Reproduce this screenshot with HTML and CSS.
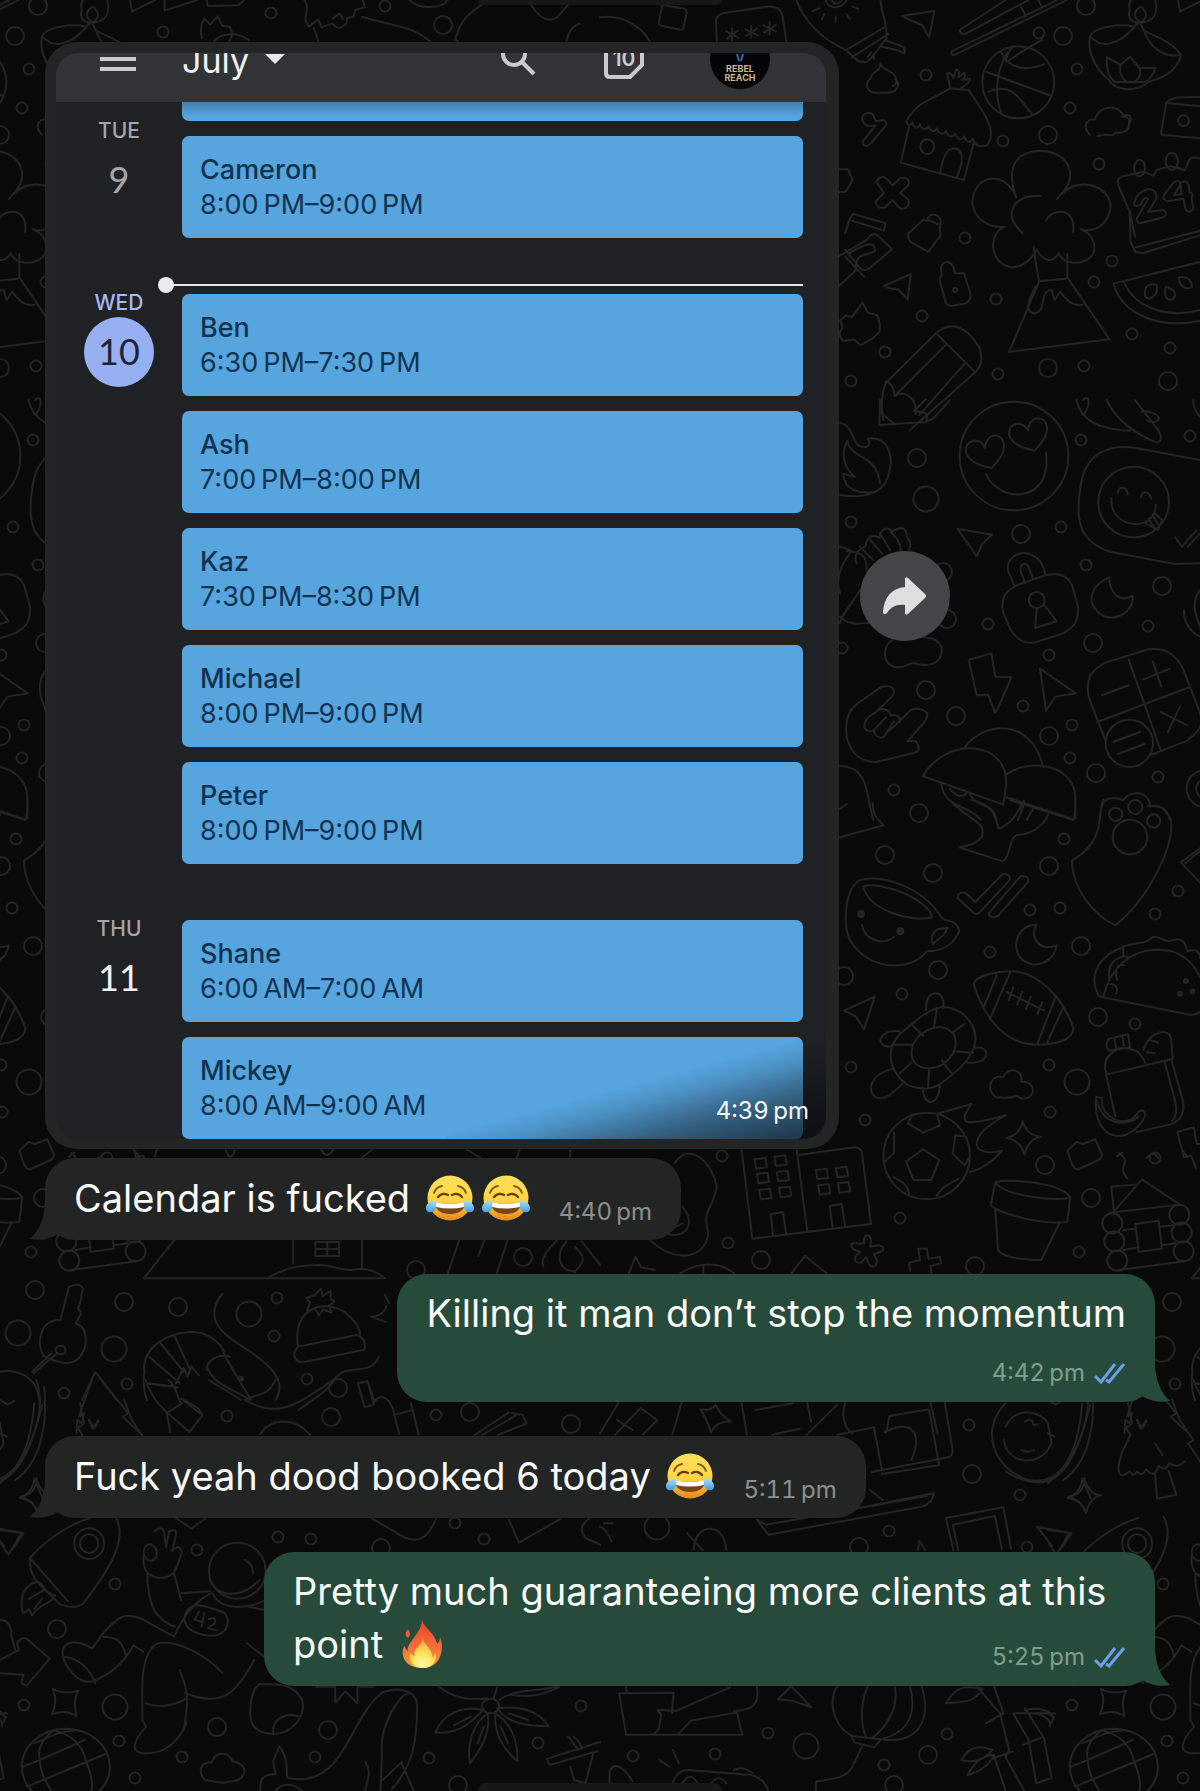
FILE: index.html
```html
<!DOCTYPE html>
<html lang="en">
<head>
<meta charset="utf-8">
<meta name="viewport" content="width=device-width, initial-scale=1">
<title>Chat</title>
<link rel="stylesheet" href="styles.css">
</head>
<body>
<svg class="wallpaper" viewBox="0 0 1200 1791" preserveAspectRatio="xMinYMin slice" aria-hidden="true">
  <defs>
    <path id="small" d="M163 32h0M271 13h0M385 6h0M1039 33h0M1077 69h0M1070 108h0M1003 141h0M926 75h0M1099 164h0M965 238h0M1112 261h0M1094 282h0M996 299h0M922 316h0M1132 334h0M1170 348h0M885 352h0M1084 366h0M998 374h0M851 381h0M851 522h0M1081 440h0M1190 436h0M1061 527h0M1086 565h0M988 624h0M1148 626h0M1049 655h0M1023 706h0M1072 725h0M1070 758h0M1158 777h0M894 790h0M842 648h0M1064 839h0M1030 910h0M1060 908h0M1178 891h0M1155 914h0M990 952h0M902 994h0M1135 1024h0M851 1067h0M1049 1065h0M1050 1112h0M865 1120h0M1155 1158h0M900 1218h0M1079 1252h0M277 1298h0M274 1336h0M64 1393h0M127 1384h0M307 1379h0M722 1156h0M728 1243h0M227 1416h0M436 1415h0M278 1537h0M311 1539h0M197 1550h0M455 1523h0M484 1539h0M115 1584h0M24 1705h0M119 1741h0M182 1757h0M315 1757h0M135 1778h0M429 1758h0M538 1743h0M581 1706h0M969 1425h0M1020 1495h0M889 1531h0M1027 1547h0M768 1733h0M947 1734h0M715 1754h0M633 1756h0M884 1765h0"/>
    <path id="medium" d="M443 25h0M1063 36h0M1048 135h0M1048 368h0M1168 381h0M1086 6h0M917 458h0M1021 534h0M1162 586h0M1093 643h0M926 690h0M956 716h0M1049 736h0M1096 773h0M919 813h0M943 572h0M947 619h0M885 855h0M933 873h0M1049 866h0M1081 946h0M938 970h0M844 976h0M1098 1017h0M1045 1165h0M1091 1198h0M35 1290h0M124 1302h0M178 1307h0M338 1388h0M523 1257h0M416 1270h0M761 1260h0M975 1266h0M331 1417h0M470 1412h0M571 1424h0M381 1548h0M57 1629h0M217 1727h0M328 1730h0M458 1785h0M972 1474h0M859 1547h0M928 1755h0M894 1785h0"/>
    <path id="large" d="M926 499h0M1077 1082h0M249 1314h0M18 1333h0M114 1349h0M115 1707h0M657 1527h0M806 1746h0"/>
    <g id="tile">
      <use href="#small" class="ring s"/><use href="#small" class="hole s"/>
      <use href="#medium" class="ring m"/><use href="#medium" class="hole m"/>
      <use href="#large" class="ring l"/><use href="#large" class="hole l"/>
      <g class="ink" transform="scale(.3827 .3333)">
        <path d="M340 0l5 35 60-35M430 0v32l85-32M540 0l3 18 80-2 15-16M528 115c-6-20-3-40 5-60l16 18 20-24 12 28 20 4c8 22 6 30-3 44M560 124c15-25 60-30 90-4M795 0c20 30-10 50 12 80l25-22 8 24 28-12c14 26 42 8 38-16l18-4 4-20 26-8-6-22M870 55l18-14 8 16M820 84l12 40M945 50l120 36c25 8 40 22 60 38M1070 0c20 28 85 28 100 0M1190 118c10-50 30-80 90-118M1190 118l8 8M1380 0c20 40 45 75 75 52l40-50M1480 124c5-30 20-50 35-52"/>
      </g>
      <g class="ink" transform="translate(600) scale(.3827 .3333)">
        <path d="M0 52c60-10 110 30 130 72M160 14l60 12q8 4 6 14l-8 44q-2 6-8 5l-50-12q-8-3-6-12l8-44q2-6 6-5M305 124l-2-60q2-22 24-26l110-18q35-2 40 28l10 76M345 85v38M330 94l32 20M360 92l-28 24M395 78v36M380 88l32 18M410 86l-28 22M443 66v38M428 76l32 18M459 75l-30 22"/>
        <path d="M513 0c20 65 70 120 130 150l30 32c20 10 30 2 40-14l35-52c6-40-15-80-15-118M643 150l100-68M658 172l95-70M748 122l40 16q12 8 8 20-8 2-14-6l-45-12M590 0c4 30 50 30 56-8M605 0c6 16 24 14 28-6M572 25l-16 8M586 42l-6 16M616 50v16M644 42l8 14M660 20l14 6M700 170l8-12M716 165v12"/>
        <path d="M788 48l86-16-14 80-18-36zM1060 0L940 90q2 14 14 12L1120 0M1195 0L918 154q-2 12 10 10L1220 0M1100 20l12 28M1142-8l12 28"/>
        <path d="M732 192c8 20 40 20 42 48 12 16 0 38-20 38h-40c-22-8-20-36-6-42-2-24 28-20 24-44zM765 258c12-4 10-16 6-20M690 370c-8-14-6-30 12-32 14 0 15 16 18 26l22-4q10 8 4 18l-40 54q-16 14-20-6l34-50c-12 4-22 4-30-6z"/>
        <ellipse cx="1093" cy="247" rx="94" ry="108"/><path d="M1048 155c20 50 60 60 112 38M1080 138c-50 60-50 150-30 205M1010 216l170 72M1015 275c60-30 80 20 115 70M1075 140c-30 80-20 40 80-20"/>
        <path d="M915 265c-40 30-90 40-115 100 4 12 10 14 16 2 4 20 16 20 20 4 4 20 18 20 22 6 6 20 18 20 22 8 6 20 18 20 24 8 4 18 18 22 24 8 6 20 18 22 24 8 6 20 16 22 22 6 4 20 12 26 26 24 10 0 14-4 16-12 20-40-14-90-52-156zM915 265l-8-44c8-6 12 4 16 12l8-25c10 4 8 14 6 24l14-14c8 8 2 14-4 22l20-4c0 12-10 16-22 28M808 378l-22 110 165 52 25-110M890 515c5-40 15-70 35-70 30 4 22 50 8 84"/><ellipse cx="855" cy="440" rx="18" ry="22"/>
        <path d="M1280 110c10-30 80-40 115-30l15-15 10 25c30 20 70 30 98 74-10 55-50 70-85 82-30 30-85 30-105-8-32-30-55-80-48-128zM1283 112c30 35 70 22 112-28M1420 86c15 60 60 90 96 78M1324 172l36 22 25-24 25 34 42 0c-8 20-16 40-34 42h-72c-16-10-22-40-22-74zM1360 194c-4 25 4 40 14 50M1410 204c4 20-2 35-12 40M1384 30c-8 30 10 38 25 38 40 0 50-30 42-68M1384 30q-4-20 4-30M1414 68c-30-20-10-45 0-48 14 16 20 26 0 48"/>
        <path d="M1280 404c-18-20-14-46 14-46 8-44 62-46 74-10 20-10 20 8 18 16M1300 408l24-4q20 6 22-6c30 2 38-12 36-30M1365 350c14-4 20 8 18 24"/>
        <path d="M1600 290l-80 2q-30 2-40 16l-14 90q0 8 12 8l160 16M1478 308l120 14"/><ellipse cx="1525" cy="362" rx="14" ry="16"/>
        <path d="M1088 592c-30-90 0-136 60-140 60 0 100 50 70 112l-24 34c50-80 140-40 140 22-4 50-40 80-78 68 50 20 50 98-12 100-24 0-40-10-45-28-20 34-40 22-58-10-40 80-110 60-114-14 0-20 10-50 32-56-40 5-80-20-86-70 0-80 80-110 115-18M1105 700c-54-50-30-118 48-112M1166 662c14-40 80-40 70 34M1133 742l14 104-78 210 262-38-110-186V762M1147 844l70-8M1138 860c-30 60-20 80 0 80 30-10 10-70 42-70l8 30 14-24c20 30 40 44 58 38"/>
        <path d="M722 545q14-25 30-6l12 18 20-22q28-6 22 20l-22 24 22 20q4 26-20 28l-22-26-20 22q-22 4-24-18l22-26zM622 508h26l12 32-18 35-20 2M640 700l14-48 8-10 84 28-4 22-84-30M622 770l75-50 10-14q10-8 20 2l36 40-62 60q-14 6-22-4l-38-54M622 860l48-50M640 770l50 60M650 760c60-40 70-30 68-6-20 16-50-4-52 60"/>
        <path d="M806 700l38-40 12 2c-4-24 34-24 34 4l-2 22 2 18-32 50-44-28c-10-10-10-18-8-28zM858 660l24 12M893 826l-2-22c4-26 30-24 34 6l4 10 22 0 14 50q10 24-8 40l-38 8q-14 0-18-20l-12-50q-2-18 4-22zM742 858l70-36-8 76-26-30q-20 0-36-10z"/><circle cx="928" cy="870" r="6"/>
        <path d="M686 908l14 30 24 8q10 20 6 50l-18 20-32 20-16-18-28 6q-14-20-8-30l6-10-6-24 16-14 14 6zM740 1260q-10-60 6-110l132-150c40-40 80-20 112 40 12 40 6 60-12 80L810 1290M746 1144c20 8 20 20 24 44 30-20 60 10 54 54M770 1188l136-156M834 1246l118-154M878 1000l104 118"/>
        <path d="M1568 475c-20-6-30 0-32 16l-8 20-16-6-20-6-36 10-10 18-26-12-48 12q-24 4-18 28l30 80 2 90 14 32 20 2 150-54M1400 742l170-50M1384 632l14 80"/><ellipse cx="1410" cy="504" rx="14" ry="25"/><ellipse cx="1494" cy="484" rx="16" ry="26"/>
        <path d="M1396 612c6-50 62-60 58-16l-22 40 40-6q14 10 0 22l-60 18q-16-6-6-22l26-50c-4-10-16 0-18 14-8 8-18 8-18 0zM1500 546q18-8 16 10l-16 30 20-4-4-32q14-14 22 4l2 22q12 4 6 16l4 36q-12 14-20 0l-6-32-42 8q-14-8-8-20z"/>
        <path d="M1570 785l-228 66c20 90 120 140 230 110M1370 848c30 80 120 110 204 80M1425 890c-6-30 6-40 30-36 4 30-18 54-30 36zM1478 860c24 10 30 20 20 38-20 6-24-12-20-38zM1512 832c24-4 36 10 34 30-20 10-32-6-34-30z"/>
      </g>
      <g class="ink" transform="translate(840 400) scale(.3333)">
        <path d="M120 0l-2 75 130-8q20-2 36-16L330 0M120 35l44 38M222 32l36-34M222 32l36 8q6 10 0 26M0 68c50 15 30 66 70 74 24-2 20-20 12-26 60-10 86 50 60 120-20 50-80 60-142 48M22 122c-20 40-12 80 22 108-20-2-30-10-34-8 2 50 50 60 92 54M22 122c14 60 90 40 98 128"/>
        <circle cx="522" cy="168" r="163"/><path d="M455 204c-60-10-90-40-72-72 20-20 44-8 52 12 4-44 44-46 54-22 10 26-4 50-34 82zM584 152c-56-10-90-38-72-70 20-20 44-8 52 10 4-44 44-46 54-22 10 26-4 50-34 82zM438 222c40 90 200 90 180-64"/>
        <path d="M710 0c10 60 70 90 160 92M730 0c20-20 20 20 4 40M800 0c30 60 80 100 150 128q20 0 8-34L885 0M905 36c20-6 50 6 52 20-4 14-30 12-36 4M1060 0q0 30 20 50"/>
        <path d="M1080 180l-180-34c-100-20-160 20-176 100-20 110-10 180 90 210l190 36 76-2"/><circle cx="881" cy="306" r="106"/><path d="M833 278c4-20 26-20 30 4M902 292c4-20 26-20 32 4M815 294c-10 90 130 110 132 20M914 368l40 22 12-30-20-18M926 356l18 30M938 346l18 30M1006 412l20 28 44-50M1044 440l36-40"/>
        <path d="M352 386l104 18-30 28-16 38-18-28z"/>
        <path d="M50 490c-10-20 0-40 26-50 4-30 22-40 42-26 4-30 24-36 40-20 30-20 44-4 42 16 14 14 12 26 8 40M60 440l40 40M90 420l36 40M120 400l30 50M152 396c20 20 30 30 30 60M0 440q60 20 20 14c60 0 60 30 60 60M30 460c-40 50-40 90-30 120M60 570c-30 50-60 80-60 100M0 650c30 30 60 20 90 18M158 720c-36 20-30 80 14 82 30 2 30-14 50-12 60 16 90-10 82-50-10-28-44-26-54-28"/>
        <path d="M524 558l-18-40c-20-60 80-90 106-10l4 14M556 550l-14-36c-4-26 20-28 24-12l14 36M530 556l80-28q60-20 86 26l18 66c4 50-20 70-56 84l-68 22q-50 12-80-40l-22-54c-4-40 6-56 42-76z"/><circle cx="590" cy="600" r="24"/><path d="M590 624l-4 60 64-20-40-52M808 532c-40 16-60 50-52 76 30 80 130 40 122-20-40 20-70-10-70-56zM1032 630c0 40 20 66 48 80M1080 570c-30 40-10 80 0 110"/>
        <path d="M386 780l68-20 12 70 48 2-36 84-12 22-22-54-34 2zM600 806l108 74-62 10-28 42z"/>
        <path d="M772 960l-26-70c-10-60 10-80 50-102l130-40q70-10 104 60l50 130c14 50-14 60-38 84l-106 42M772 966l276-104M866 778l96 272M786 886l80-30M910 838l80-32M938 784l26 76M962 936l80 40M1020 920l-36 76M772 960l24 60"/><circle cx="868" cy="1030" r="71"/><path d="M820 1026l80-30M834 1062l80-30"/>
        <path d="M20 1010c-6-60 10-80 30-98l72-50c30-10 50 4 34 28l-50 48c-20 10-36 24-32 46 8 12 20 12 28 6 0 20 20 26 30 20 10-20 20-22 30-30l50-50q30-10 50 10c2 20-20 40-60 84l26 0q20 30-10 36l-110 26q-70 0-88-76zM106 938c20-20 40-10 46 8 20-4 30 6 28 20M102 990l36-38M132 1010l30-46"/>
        <path d="M374 1042c60-80 200-90 236 60M248 1128c70-120 260-110 250 30l-8 56zM496 1126c60-50 200-40 210 60l0 70M304 1154c10 70 80 60 120 106M330 1166c20 30 40 24 50 14M390 1184c20 40 70 20 80 76M500 1192l200 66M550 1218l-16 42M580 1226l-20 34M0 1098c80 0 80 80 90 120l10 42M0 1226l20-14"/>
        <path d="M780 1260c0-60 20-76 70-60 20-30 80-30 80 20 30-10 50 10 60 40"/><circle cx="827" cy="1243" r="20"/><circle cx="886" cy="1221" r="21"/><circle cx="1096" cy="1166" r="56"/><circle cx="1096" cy="1166" r="28"/>
      </g>
      <g class="ink" transform="translate(840 800) scale(.3333)">
        <path d="M98 10c0 40 20 50 32 66L0 112M330 0c50 60 110 60 96 110q-20 26-68 32l130 42c26-10 16-80 50-80 50-4 80-40 86-60M396 0c80 20 70 70 80 86 50-20 60-60 76-84M510 0l190 60q8-20 6-60M790 0c-20 50 10 120-94 182 0 80 60 160 130 194 100-80 180-240 166-320-14-36-40-40-68-38"/><circle cx="941" cy="63" r="20"/><circle cx="870" cy="111" r="52"/>
        <path d="M1080 145l-58 42 58 60M1036 190l44-36M60 240C10 270 10 380 30 420c50 90 180 100 230 34 50 0 80-20 98-60-4-30-30-30-50-38C240 250 120 226 60 240zM70 260c50-20 200 40 206 92-60 16-190-20-206-92zM292 388l30-4-10 20-34 28c-6-20 0-34 14-44zM66 376c10 50 70 60 96 34"/><circle class="fill" cx="63" cy="342" r="9"/><circle class="fill" cx="181" cy="394" r="9"/>
        <path d="M352 294q4-22 26-14l28 26 82-84q26 0 20 20l-90 96q-12 8-22-4zM446 340l96-112q24-2 24 16l-92 104q-24 10-28-8zM588 374c-60 0-80 80-34 110 40 24 90-4 96-48-50 20-80-20-62-62z"/>
        <path d="M402 556c-4-30 80-44 120-42 60 4 140 60 178 170 0 40-60 50-110 50-80 0-150-60-188-178zM470 526l-38 94M510 518l-60 140M648 588l-56 144M670 622l-50 108M500 576l112 56M520 562l-14 38M546 576l-14 38M572 590l-14 38M606 606l-14 38"/>
        <path d="M850 440c60-20 50 0 90-30 30 0 30 20 60 10 30-10 40 20 42 34 30-10 38 6 38 20M778 590c-40-70 10-130 72-148l0 26M780 590l270 54q20 2 30-8M790 590c20-80 80-150 180-140 60 4 90 40 110 80M808 540c-10-60 40-80 60-66M832 540c-10-30 0-50 20-44M812 552c16 0 24 14 16 30"/><circle class="fill" cx="1038" cy="543" r="6"/><circle class="fill" cx="1020" cy="581" r="6"/><circle class="fill" cx="1058" cy="574" r="6"/>
        <path d="M12 632l92-42-32 98-26-40zM206 680c80-70 110-70 160-40 60 50 50 110-6 164-60 50-80 80-160 50-60-50-70-120 6-174zM236 708c50-40 90-30 108 0 10 40-10 70-44 90-60 20-100-10-80-66zM290 628l-8 56M216 674l34 34M156 734h62M180 820l34-32M264 864l4-60M336 822l-30-40M400 758l-60-4M376 670l-38 28M258 630c-4-66 60-66 52-6M178 694c-60-10-80 50-22 46M404 744c50-10 50 50-20 44M160 806c-80 20-80 80-44 88 20 4 40-10 74-46M248 862c0 60 50 60 52-10M468 892c-30-20-20-70 22-60 10-30 60-30 54 14 40-8 50 50 4 50-10 0-12-8-20-8-20 8-40 6-60 4z"/>
        <path d="M804 718l60-16 6 40-62 10q-14-10-4-34zM824 720l4 26M848 712l4 26M800 820c-20-40 20-70 44-76 50 0 60 20 72 44M798 824l196-46 36 130q6 50-40 66l-100 22M798 824l28 124M974 786l32 120q8 40-10 58M910 750c20-60 80-70 84-30l4 56M930 720l24 8M920 756l24 4M768 890l18 4c-8 60 80 100 110 40 10-6 20 0 20 12-40 90-160 90-148-56M770 900c20 80 90 80 126 50"/>
        <circle cx="260" cy="1068" r="130"/><path d="M216 946l-12 24 46 28 50-22-8-32M250 1048l48 32-24 60h-54l-22-56zM346 1006l-8 56 36 34 16-26M346 1006l30 4M134 1086l28-28v-60M160 1130c20 20 40 10 48 56M290 1186l20-24 46-26M290 942l104-30c-40 60-30 70 104 34-120 60-110 130-12 106q-40 50-96 64M548 964q14 44 54 46-40 10-48 54-14-44-54-50 40-10 48-50zM682 1052l28-26 20 6 36-14 20 46q0 10-10 16l-62 28q-10 0-18-16z"/>
        <path d="M466 1146c40-10 200 0 226 48-60 10-210-10-226-48zM466 1146l-14 70c20 20 140 60 230 50l8-70M466 1230l8 120c20 30 110 30 130 30l56-114M1012 996l50-14 8 50h20M1012 996l20 76 22-4 14 36M838 1060c40 30-10 36 24 76M814 1160l70-6M814 1160l8 74 84-96 114 76-210 24M886 1272l70-10 10 84-70 10zM850 1290l34-4M850 1350l38-6M960 1280l40-4M966 1336l40-6M834 1410l200-26"/>
        <circle cx="817" cy="1270" r="30"/><circle cx="823" cy="1324" r="30"/><circle cx="832" cy="1382" r="30"/><circle cx="1018" cy="1244" r="30"/><circle cx="1025" cy="1298" r="30"/><circle cx="1031" cy="1354" r="30"/>
      </g>
      <g class="ink" transform="translate(0 1000) scale(.3827 .3333)">
        <path d="M376 835l90-130M376 835h630c-20-20-40-30-70-28-40 10-60-10-100-12-60 0-90 10-140 40M766 720v70M946 720v88M824 726h62v42h-62zM855 726v42M824 747h62M180 470l14-12M258 474q18-26 30 0M350 450l14 20M404 470l6-22M590 450q12 40 24 0M840 450q14 30 30 0M945 474l28-26M1220 450l34 22M1350 474l8-26M1490 450v20M1170 820l30-100M1250 768l16-48M1298 820l28-98M1420 800c-10-30 20-60 36-80M1480 724c-30 40-20 90 20 90M1502 740c40 40 10 60 0 76M1520 724l48 70"/>
        <path d="M158 960l22-100q30-14 36 6l-6 40-6 20 8 14-14 30c30 10 30 60 20 84-20 50-60 40-104 14-20-40-10-110 44-108zM150 1060l-62 60M134 1060l-50 56"/><circle cx="158" cy="1050" r="13"/><path d="M0 1115c60-10 100 30 102 85M580 882c-60 90 30 140 70 170 90 70 90 110 70 148M376 1110c0-70 60-110 120-115 60 0 90 50 90 70l70 135M384 1200c-10-30-10-60-6-90M390 1070l80 80M420 1030l60 86M455 1005l40 100M540 1110c0-30 30-50 60-40M540 1100c20 60 80 70 110 100M384 1150l74 10M460 1150l20-46 10 26 10-30 20 26M215 1200l34-84 56 84"/>
        <circle class="fill" cx="629" cy="1136" r="6"/><path d="M778 1040c-10-100 40-120 70-122 60 0 90 60 94 86M778 1040l155-35q24 10 20 44l-160 38q-26 0-24-30zM838 866l6 22 20-16 0 24 10 8-14 12 6 22-22-10-10 18-12-20-20 6 8-24-10-14 22-8zM1005 884l12 26M970 950q30 0 40-32M970 950l38 16M990 1070c-20 60-80 20-110 60-30 50-40 50-100 100M935 1150l26-6 16 56"/>
      </g>
      <g class="ink" transform="translate(600 1000) scale(.3827 .3333)">
        <path d="M370 450l28 266 310-44-24-216q-4-14-20-14l-142 22M514 450l28 246M404 478l28-4 4 28-28 4zM456 470l28-4 4 28-28 4zM410 522l28-4 4 28-28 4zM462 516l28-4 4 28-28 4zM416 570l28-4 4 28-28 4zM468 564l28-4 4 28-28 4zM564 510l28-4 4 28-28 4zM616 504l28-4 4 28-28 4zM570 556l28-4 4 28-28 4zM622 550l28-4 4 28-28 4zM452 708l-6-66 32-6 8 66M608 684l-8-66 32-6 8 66M195 490c40-70 100 0 110 70-10 70-40 70-22 140-10 90-100 80-150 22M216 620c40 60 0 100-46 80M180 690l36-20"/>
        <path d="M690 730c-4-34 20-30 18-4l-2 14 20-4c20 2 16 16 6 20l-16 6 8 22c-4 24-18 18-22 6l-6-18-14 16c-20 0-18-10-12-22l10-10-18-8c-12-16 0-24 14-16zM832 746h22l4 30 30-6 4 20-28 8 2 22M832 746l4 34-28 8 2 24M500 820l36-52 56 52M210 820c40-30 100-40 140 0M270 796v24M75 820l18-50 14 32 36 8"/>
      </g>
      <g class="ink" transform="translate(0 1380) scale(.3827 .3333)">
        <path d="M95 0c30 100-20 240-95 310M115 20c10 120-10 230-75 280M0 60l20 14 18-12M0 160l18 10M200 160l2-40 12 10 6-30-14 10 34-110M265 0l70 100-14 10 50 54M232 120l10 26 14-24M380 0c20 60 40 80 55 96l10 60M384 10l80 12M440 0c30 30 20 60 35 70l-40 30M435 96l60 60 34-50-56-50M529 106l-10-20-44-30M546 0l84 60M640 60c30-20 60-10 80-60M640 60c90 60 140 10 230-60M680 162c30-50 90-50 130 2M935 10l26-6 16 70-24 8zM977 66c20-30 40-8 50 20l16 76M1074 70l20 94M1030 104l50-14M1240 165l90-68M1260 165l90-60M1300 165l76-34-10-26-30-6"/>
        <path d="M90 296l22 60M90 296c-6 36-14 44-38 58M52 354c24 4 40 20 42 36"/>
        <path d="M236 414c-60 20-120 70-158 120-4 70 40 90 80 140 30 10 40 10 60-4 60-90 120-190 84-260M78 534l100 130M60 700c-10-40 0-90 40-94 20 10 10 30 44 40-10 30-40 20-60 60-4-10-6-12-8-18zM76 656l40-26M90 686l20-30"/><ellipse cx="233" cy="491" rx="39" ry="46"/><ellipse cx="233" cy="491" rx="24" ry="28"/>
        <path d="M0 450l56 8-34 66-20-34M460 414l40 32 36-30M970 414l60 40c60 50 90 20 110-40M1330 420l26 68 110-72M1540 414c-30 30-20 40-10 60l38 20"/>
        <path d="M404 454q16-18 24 0l6 48 8-48q20-10 18 10l-10 50c20-30 30 0 20 20-10 40-20 60-54 60-40-6-44-40-40-70-4-30 20-46 34-10 0 30-20 40-34 10M385 580c0 90 20 140 72 160M455 580l18 80M470 640l80-6M548 600c20 50 80 60 130 0M640 540q20 10 22 40M555 640c20 50 90 50 140 20M550 640c-50 30-80 90-95 130l-86-54c-40-20-60-10-104 50l-24 40c-60-40-90-10-72 40 30 60 60 70 90 50 50-30 70-60 90-100l26 20M270 770c30 0 50 10 60 60M165 830c30 0 70 30 84 80M490 690c16-26 50-10 92 6 20 14 14 50 0 60-20 20-60 10-84-6-20-20-20-40-8-60zM372 1020c0-80-10-200 40-230 60-10 130 40 170 90M470 870c10 40 30 60 10 180M380 970c30 14 70 10 106-14M372 1020l10 20c-40 50-40 80 0 80 60 0 90-50 105-90M484 940c90 40 130 10 180-100M645 790l45 40M650 680l40 10"/>
        <ellipse cx="620" cy="572" rx="74" ry="84"/>
        <path d="M520 695l-12 24 22 8M534 700l-8 40M545 718q20-10 16 12l-18 14 24 8"/>
        <path d="M0 840l50-30-6-20q10-20 26-14l60 60-60 80q-10 0-14-10l6-22L0 880M0 720q30 0 30 50l10 40M0 1000l16 12-10 20M138 926q30 20 66 6-14 30-4 76-30-20-64-6 16-40 2-76zM680 912c50 0 90 0 110 50 10 50-30 100-76 100-50-4-60-30-60-60 0-40 6-80 26-90zM714 1060c-4-40 30-66 70-50M826 920h50v48l26-34 32 36v-50h40M680 1233c0-30 0-50 40-50l-6-40 16-44c20 30 20 60 20 94 150 40 160-180 250-256 50-20 90 0 90 40 0 100-10 180-66 250M1070 940c-20 0-60 60-72 140 0 60 0 90-4 150M955 1145c20 40 0 60 0 88M1050 1150l30 80M1000 1200l50-54M720 1233c20-30 50-20 70 0"/>
        <path d="M535 1200c-20-30-10-54 18-52 10-40 50-30 54-4 44 10 40 50 4 60-20 0-16 4-26 4-20 0-40-8-50-8z"/><ellipse cx="172" cy="1160" rx="115" ry="114"/><path d="M60 1160l44-20 118-60M70 1220l160-76 50-24M90 1090l60-30 50-10M104 1140c-10-40 20-80 40-90M225 1144c-10-50-40-80-80-92M104 1140c0 40 20 70 30 93M225 1144c10 30 20 60 14 90"/>
        <circle cx="1282" cy="978" r="22"/><path d="M1275 955c-80 10-110-20-130-36M1290 955l10-36M1305 960c50-40 100-20 160-44M1330 944c60 10 90 0 130-22M1300 985c60-10 110 10 134 54-60 0-110-10-134-54zM1294 1000c40 30 60 80 58 144-40-40-60-80-58-144zM1274 1000c10 60-20 110-46 150-10-60 10-120 46-150zM1262 990c-40 50-70 70-124 68 20-60 70-80 124-68zM1330 1000l50 20M1308 1040l20 50M1264 1040l-16 50M1230 1010l-44 26M1430 1136l138-50M1430 1136q0 14 10 18l120-40M1485 1070l26 40M1500 1070q20 20 20 38M1490 1160l10 40 30 10 20-90"/>
      </g>
      <g class="ink" transform="translate(600 1400) scale(.3827 .3333)">
        <path d="M0 100L50 5M40 104l66-80 44 36-38 44M45 60l40 30M215 0l-26 104M262 28q30 6 40-14 10 30 40 50-40 0-52 34-10-40-28-70zM370 10l14 94M405 30l100-20M540 0l12 66M450 104l72-18M540 104l80-90M640 10c-10 40 0 80 20 90M620 104l96-22M716 82l20 124M744 96c70-40 100 0 70 84M748 98l8-50 104-20 26 168-150 26M862 0l20 100M900 0l20 140q4 30-10 32l-200 44M705 270l34 30M410 360l30 44 400-84q30-10 32-40l-180 40M410 360l24 14 420-86"/>
        <path d="M1060 10c-70 80-30 200 60 230 90 20 130-90 140-230M1060 215c90 60 170 60 220-200M1060 80c30-70 100-40 110-10l10 60c-30 80-120 60-124-10M1110 66q10-10 20-4 0 20 14 10M1100 150q20 10 34 0M1380 10l10 60-16 14 12 20-22 54c-20 70-4 80 20 56q10 20 20 0 10 20 24-6 20 30 32-10 20 20 28-10 20 20 40-4M1404 60l12 26 12-22M1450 130l20 36M1450 220l6 76 50-12-20-70M1495 0l20 60 36 60-14 10 34 60M1266 234q10 50 44 52-30 6-40 54-10-40-46-50 40-4 42-56M904 354l150-32 20 124M904 354l20 98M922 374l110-26 18 100M922 374l14 76M1142 380l90 20-30 50M1142 380l40 60"/>
        <path d="M0 380q20 10 30 44M10 370l22 0M228 400l40 50M245 450c0-80 80-90 85 0M830 452l4-30 16 28M68 858l2 22M50 880l142-2-4 60M50 880l18 124h304l-14-66-120 24-34 40M150 930l10 14-6 44-14 14M150 930l50 2 140-70M410 860c10 60-20 70-60 74M465 898l35-40 52 64-50-20zM620 858c-30 60 0 130 40 150M660 1008l70 10c130 20 130-100 110-160M700 858c-20 50-20 120-4 154M770 858c10 60-10 110-60 158M810 858c20 90-10 140-70 158M656 1008l10 20 50 14 16-20M684 1040l-20 50M664 1085c-10 50-50 50-100 60v28M190 1050l16 40M155 1080l26 20M25 1173v-60q20-40 60 30M190 1150q10-40 40-40l160 14q40 10 50 49M350 1110q20-14 50 10M215 1150q20-40 40 0M290 1150q20-30 40 0"/>
        <path d="M904 910c30-60 60-50 96-44-20 40-50 40-96 44M985 860l60 80 24 110-10 20 50 103M1030 860l24 80-46 30M1080 940l40 80 20 130 40-16-20-120-50-90M1080 940l110 0M1110 930c40-10 60 0 70 16M1120 940c40 0 60 20 56 40M1028 1075l50-20M1106 1034l46-20M945 1080c20-50 60-40 80-30-20 30-50 40-80 30M960 1125c20-40 40-60 70-60-20 40-40 50-70 60M1030 1070l30 103"/>
      </g>
    </g>
    <symbol id="joy" viewBox="0 0 50 48">
      <circle cx="25" cy="24" r="22.500" fill="url(#face)"/>
      <path d="M9 19q2-6 8-7M41 19q-2-6-8-7" fill="none" stroke="#8a5412" stroke-width="1.800" stroke-linecap="round"/>
      <path d="M13 23q4-5 10-2M37 23q-4-5-10-2" fill="none" stroke="#6b3d0d" stroke-width="2.400" stroke-linecap="round"/>
      <path d="M9 28q16 4 32 0-2 12-16 12T9 28z" fill="#7a4318"/>
      <path d="M10 28q15 4 30 0l-1 5q-14 3-28 0z" fill="#fff"/>
      <path d="M11 27C6 26 1 30 1 34c0 4 3 5 6 4 4-1 5-6 4-11zM39 27c5-1 10 3 10 7 0 4-3 5-6 4-4-1-5-6-4-11z" fill="url(#tear)"/>
    </symbol>
    <linearGradient id="face" x1="0" y1="0" x2="0" y2="1"><stop offset="0" stop-color="#fce05c"/><stop offset=".55" stop-color="#fdd645"/><stop offset="1" stop-color="#e5871b"/></linearGradient>
    <linearGradient id="tear" x1="0" y1="0" x2="0" y2="1"><stop offset="0" stop-color="#a8def8"/><stop offset="1" stop-color="#3f9de0"/></linearGradient>
    <linearGradient id="flame" x1="0" y1="0" x2="0" y2="1"><stop offset="0" stop-color="#e8402b"/><stop offset=".6" stop-color="#f4733a"/><stop offset="1" stop-color="#f99a3c"/></linearGradient>
    <radialGradient id="core" cx=".5" cy=".9" r=".8"><stop offset="0" stop-color="#fffbb0"/><stop offset=".5" stop-color="#fde35a"/><stop offset="1" stop-color="#fbab42"/></radialGradient>
    <symbol id="tail" viewBox="0 0 30 40"><path d="M15 0C15 18 9 31 0 39c10 2 20 0 28-5L30 0z"/></symbol>
    <symbol id="ticks" viewBox="0 0 33 23"><path d="M2 14l6 6L22 2M13 18l3 2L31 2" fill="none" stroke="#6b9fea" stroke-width="3"/></symbol>
  </defs>
  <use href="#tile"/><use href="#tile" x="-1048"/><use href="#tile" x="1048"/>
</svg>

<div class="pill top-pill"></div>
<main class="chat">
  <div class="media-row">
    <article class="media">
      <div class="calendar">
        <header class="bar-crop">
          <div class="bar">
            <button class="icon" aria-label="Menu"><svg width="36" height="26" viewBox="0 0 36 26"><path d="M0 3h36M0 13h36M0 23h36" stroke="#c9cacc" stroke-width="4"/></svg></button>
            <button class="month"><span>July</span><svg width="20" height="10" viewBox="0 0 20 10" aria-hidden="true"><path d="M0 0h20L10 10z" fill="#e8e9eb"/></svg></button>
            <button class="icon" aria-label="Search"><svg width="36" height="36" viewBox="0 0 36 36"><g fill="none" stroke="#c9cacc" stroke-width="4"><circle cx="14" cy="13" r="11"/><path d="M22 21l12 12"/></g></svg></button>
            <button class="icon" aria-label="Today"><svg width="40" height="40" viewBox="0 0 40 40"><path d="M2 0v34q0 4 4 4h20l12-12V0" fill="none" stroke="#c9cacc" stroke-width="4"/><text x="20" y="27" text-anchor="middle" class="today">10</text></svg></button>
            <div class="avatar"><svg width="12" height="10" viewBox="0 0 12 10" aria-hidden="true"><path d="M3 0l2 7M9 0L7 7" stroke="#2d6ca5" stroke-width="2"/></svg><span>REBEL</span><span>REACH</span></div>
          </div>
        </header>
        <section class="day first">
          <div class="date"><span class="dow">TUE</span><span class="num past">9</span></div>
          <div class="events">
            <div class="event cut"></div>
            <div class="event"><b>Cameron</b><span>8:00&#8239;PM–9:00&#8239;PM</span></div>
          </div>
        </section>
        <section class="day">
          <div class="date today-date"><span class="dow">WED</span><span class="num">10</span></div>
          <div class="events">
            <div class="now"></div>
            <div class="event"><b>Ben</b><span>6:30&#8239;PM–7:30&#8239;PM</span></div>
            <div class="event"><b>Ash</b><span>7:00&#8239;PM–8:00&#8239;PM</span></div>
            <div class="event"><b>Kaz</b><span>7:30&#8239;PM–8:30&#8239;PM</span></div>
            <div class="event"><b>Michael</b><span>8:00&#8239;PM–9:00&#8239;PM</span></div>
            <div class="event"><b>Peter</b><span>8:00&#8239;PM–9:00&#8239;PM</span></div>
          </div>
        </section>
        <section class="day">
          <div class="date"><span class="dow">THU</span><span class="num">11</span></div>
          <div class="events">
            <div class="event"><b>Shane</b><span>6:00&#8239;AM–7:00&#8239;AM</span></div>
            <div class="event"><b>Mickey</b><span>8:00&#8239;AM–9:00&#8239;AM</span></div>
          </div>
        </section>
        <time class="stamp">4:39&#8239;pm</time>
      </div>
    </article>
    <button class="share" aria-label="Forward"><svg width="44" height="38" viewBox="0 0 44 38"><path d="M22 2q0-3 3-1l17 16q2 2 0 4L25 37q-3 2-3-1v-8C13 27 8 30 4 36c-2 2-4 1-4-1C1 20 9 11 22 10z" fill="#dedfdf"/></svg></button>
  </div>

  <article class="bubble in follow">
    <p>Calendar is fucked <svg class="emoji" role="img" aria-label="Tears of joy"><use href="#joy"/></svg><svg class="emoji next" role="img" aria-label="Tears of joy"><use href="#joy"/></svg></p>
    <time>4:40&#8239;pm</time>
    <svg class="tail" aria-hidden="true"><use href="#tail"/></svg>
  </article>
  <article class="bubble out stacked">
    <p>Killing it man don’t stop the momentum</p>
    <time>4:42&#8239;pm<svg class="ticks" role="img" aria-label="Read"><use href="#ticks"/></svg></time>
    <svg class="tail" aria-hidden="true"><use href="#tail"/></svg>
  </article>
  <article class="bubble in">
    <p>Fuck yeah dood booked 6 today <svg class="emoji" role="img" aria-label="Tears of joy"><use href="#joy"/></svg></p>
    <time>5:11&#8239;pm</time>
    <svg class="tail" aria-hidden="true"><use href="#tail"/></svg>
  </article>
  <article class="bubble out wrap">
    <p>Pretty much guaranteeing more clients at this point <svg class="emoji" role="img" aria-label="Fire" viewBox="0 0 50 48"><path d="M24 0c2 8 14 14 15 24 2-2 3-4 3-7 4 8 3 31-17 31C7 48 2 36 6 26c2 2 2 4 4 5C8 22 23 15 24 0zM10 9q4 5 0 9-5-3 0-9z" fill="url(#flame)"/><path d="M25 18c0 7 10 10 9 19q2 0 3-4c3 8-3 15-12 15S10 42 12 33q2 3 5 3c-3-7 7-10 8-18z" fill="url(#core)"/></svg><time>5:25&#8239;pm<svg class="ticks" role="img" aria-label="Read"><use href="#ticks"/></svg></time></p>
    <svg class="tail" aria-hidden="true"><use href="#tail"/></svg>
  </article>
</main>
<div class="pill bottom-pill"></div>
</body>
</html>
```
FILE: styles.css
```css
* { box-sizing: border-box; }

body {
  position: relative;
  margin: 0;
  min-height: 100vh;
  overflow-x: hidden;
  display: flex;
  flex-direction: column;
  background: #090909;
  color: #fafafa;
  font-family: Inter, "Liberation Sans", sans-serif;
}

button { padding: 0; border: 0; background: none; color: inherit; font: inherit; cursor: pointer; }
p { margin: 0; }
time { font-variant-numeric: tabular-nums; }

/* Wallpaper */
.wallpaper { position: absolute; top: 0; left: 0; width: 100%; height: 100%; }
.ink { fill: none; stroke: #242424; stroke-width: 2px; stroke-linecap: round; stroke-linejoin: round; }
.ink * { vector-effect: non-scaling-stroke; }
.ink .fill { fill: #242424; }
.ring, .hole { fill: none; stroke: #242424; stroke-linecap: round; }
.hole { stroke: #090909; }
.ring.s { stroke-width: 13px; }
.hole.s { stroke-width: 9px; }
.ring.m { stroke-width: 20px; }
.hole.m { stroke-width: 16px; }
.ring.l { stroke-width: 27px; }
.hole.l { stroke-width: 23px; }

.pill { position: relative; align-self: center; width: 244px; background: #171717; }
.top-pill { height: 5px; border-radius: 0 0 16px 16px; }
.bottom-pill { height: 8px; margin-top: auto; border-radius: 16px 16px 0 0; }

.chat {
  position: relative;
  display: flex;
  flex-direction: column;
  align-items: flex-start;
  gap: 34px;
  padding: 37px 45px 60px;
}

/* Shared picture */
.media-row { display: flex; align-items: center; gap: 21px; width: 100%; }
.media {
  flex: 0 1 794px;
  padding: 11px 13px 10px 11px;
  border-radius: 32px;
  background: #232525;
}
.calendar {
  position: relative;
  overflow: hidden;
  border-radius: 22px;
  background: #202124;
}
.calendar::after {
  content: "";
  position: absolute;
  right: 0;
  bottom: 0;
  width: 380px;
  height: 104px;
  background: linear-gradient(165deg, transparent 48%, rgba(8, 9, 12, .12) 58%, rgba(8, 9, 12, .45) 76%, rgba(8, 9, 12, .68) 94%);
}
.bar-crop {
  position: relative;
  display: flex;
  align-items: flex-end;
  height: 49px;
  overflow: hidden;
  background: #323337;
}
.bar {
  display: flex;
  flex: 1;
  align-items: center;
  height: 86px;
  padding: 0 56px 0 44px;
}
.icon { display: flex; }
.month {
  display: flex;
  align-items: center;
  gap: 16px;
  margin: 0 auto 0 46px;
  color: #f1f1f2;
  font-size: 34px;
  line-height: 42px;
}
.month span { padding-top: 3px; }
.icon + .icon { margin-left: 68px; }
.today { fill: #c9cacc; font-size: 21px; font-weight: 600; }
.avatar {
  display: flex;
  flex-direction: column;
  align-items: center;
  width: 60px;
  height: 60px;
  margin-left: 66px;
  padding-top: 25px;
  border-radius: 50%;
  background: #050507;
  color: #c9b58c;
  font-size: 9px;
  font-weight: 700;
  line-height: 9px;
}

.day { display: grid; grid-template-columns: 126px 1fr; padding: 0 23px 0 0; }
.day + .day { margin-top: 52px; }
.date { display: flex; flex-direction: column; align-items: center; gap: 3px; }
.first .date { padding-top: 16px; }
.dow { height: 24px; color: #a4a6aa; font-size: 21px; font-weight: 500; line-height: 26px; }
.num {
  width: 70px;
  height: 70px;
  border-radius: 50%;
  color: #f1f1f2;
  font-family: Lato, sans-serif;
  font-size: 36px;
  line-height: 68px;
  text-align: center;
}
.num.past { color: #a4a6aa; }
.today-date .dow { color: #a5b9f5; }
.today-date .num { background: #96b0f2; color: #1c2638; }

.events { position: relative; display: flex; flex-direction: column; gap: 15px; padding-top: 4px; }
.first .events { padding-top: 0; }
.event {
  display: flex;
  flex-direction: column;
  height: 102px;
  padding: 16px 18px 0;
  border-radius: 7px;
  background: #56a5de;
  color: #123350;
  font-size: 27px;
  line-height: 35px;
}
.event b { font-weight: 500; }
.cut {
  height: 19px;
  border-radius: 0 0 7px 7px;
  background: linear-gradient(#457fae, #56a5de 14px);
}
.now { position: absolute; top: -6px; right: 0; left: -16px; height: 2px; background: #e4e5e6; }
.now::before {
  content: "";
  position: absolute;
  top: -7px;
  left: -8px;
  width: 16px;
  height: 16px;
  border-radius: 50%;
  background: #e9eaec;
}
.stamp {
  position: absolute;
  right: 17px;
  bottom: 13px;
  z-index: 1;
  font-size: 24px;
  line-height: 30px;
}
.share {
  display: flex;
  flex: none;
  align-items: center;
  justify-content: center;
  width: 90px;
  height: 90px;
  border-radius: 50%;
  background: #434546;
}

/* Messages */
.bubble {
  position: relative;
  display: flex;
  align-items: flex-end;
  max-width: 891px;
  padding: 14px 29px 15px;
  border-radius: 30px;
  background: #232525;
  font-size: 38px;
  line-height: 53px;
}
.bubble.follow { margin-top: -25px; }
.bubble time { flex: none; color: #8d8f8f; font-size: 24px; line-height: 30px; }
.bubble.in time { margin-left: 28px; line-height: 26px; }
.out { align-self: flex-end; padding-top: 13px; padding-bottom: 14px; background: #264b3a; }
.bubble.out time { display: flex; align-items: center; align-self: flex-end; gap: 8px; color: #7f9f8e; }
.stacked { flex-direction: column; }
.stacked time { margin-top: 18px; }
.wrap time { float: right; margin-top: 24px; }
.emoji { width: 50px; height: 48px; margin-left: 4px; vertical-align: -10px; }
.emoji.next { margin-left: 6px; }
.ticks { width: 33px; height: 23px; }
.tail { position: absolute; bottom: 0; left: -15px; width: 30px; height: 40px; fill: #232525; }
.out .tail { right: -15px; left: auto; fill: #264b3a; transform: scaleX(-1); }
```
